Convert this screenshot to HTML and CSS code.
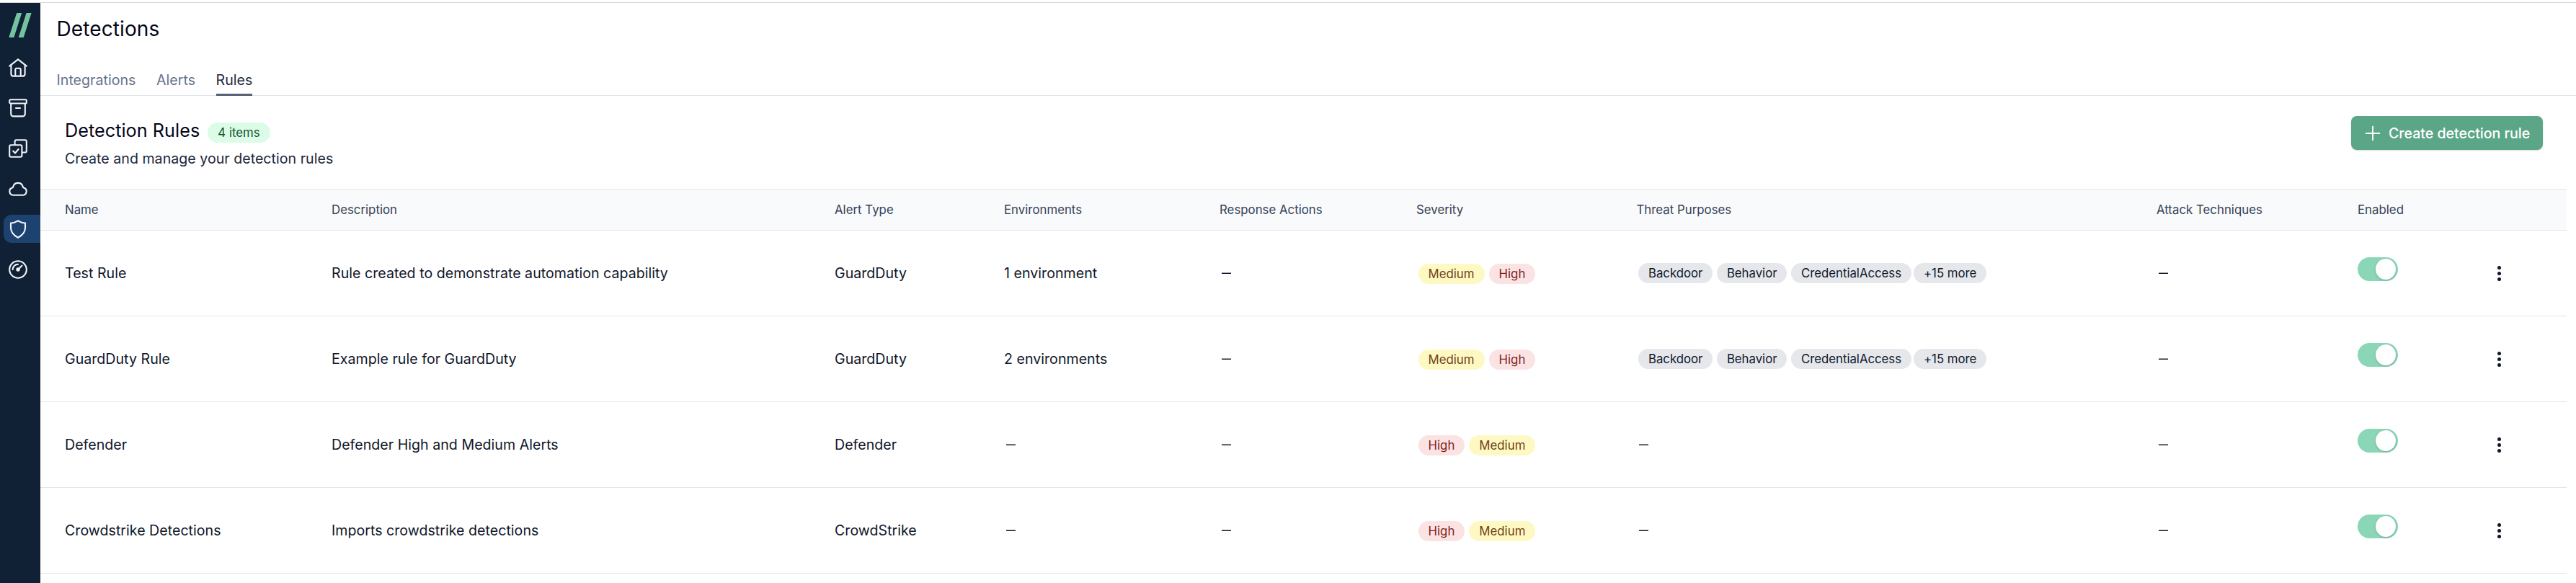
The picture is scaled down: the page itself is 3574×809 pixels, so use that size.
FILE: index.html
```html
<!DOCTYPE html>
<html lang="en">
<head>
<meta charset="utf-8">
<title>Detections</title>
<link rel="stylesheet" href="styles.css">
</head>
<body>
<div class="app">
  <nav class="sidebar">
    <svg class="logo" viewBox="0 0 56 64"><path d="M12.3 48 23.2 14h7L19.3 48zM25.7 48 36.6 14h7L32.7 48z"/></svg>
    <a class="nav-item"><svg class="icon" viewBox="0 0 28 28"><path d="M2.2 11.6 14 2.4l11.800 9.200M4.400 10v12.400q0 3.200 3.200 3.200h12.800q3.200 0 3.200-3.200V10M10.300 25.400v-8.700q0-2 2-2h3.400q2 0 2 2v8.700"/></svg></a>
    <a class="nav-item"><svg class="icon" viewBox="0 0 28 28"><path d="M3.800 2.300h20.400q1.600 0 1.600 1.600v2q0 1.600-1.600 1.600H3.800q-1.600 0-1.600-1.600v-2q0-1.600 1.600-1.600zM4.200 7.500v13.900q0 4 4 4h11.600q4 0 4-4V7.500M11 14h6"/></svg></a>
    <a class="nav-item"><svg class="icon" viewBox="0 0 28 28"><path d="M9.600 9.300V4.300q0-2 2-2h12.200q2 0 2 2v13.200q0 2-2 2h-4.400M4.200 9.300h13.200q2 0 2 2v12.400q0 2-2 2H4.200q-2 0-2-2V11.300q0-2 2-2zM7.200 17.500l2.800 3 4.600-5.500"/></svg></a>
    <a class="nav-item"><svg class="icon" viewBox="0 0 28 28"><path d="M7.500 22.800a5.300 5.300 0 0 1-1.300-10.400q.8-.3 1-1.200a7 7 0 0 1 13.600 0q.2.900 1 1.200a5.300 5.300 0 0 1-1.300 10.400z"/></svg></a>
    <a class="nav-item nav-item-active"><svg class="icon" viewBox="0 0 28 28"><path d="M14 2.300q4.500 2.900 10 3.200v6.500c0 6.500-4.300 10.700-10 13.700-5.700-3-10-7.200-10-13.700V5.500q5.500-.3 10-3.200z"/></svg></a>
    <a class="nav-item"><svg class="icon" viewBox="0 0 28 28"><circle cx="14" cy="14" r="11.800"/><path d="M6.700 14A7.300 7.300 0 0 1 14 6.700M14.500 13.500l5-5"/><circle class="hub" cx="14" cy="14" r="2.700"/></svg></a>
  </nav>
  <main class="main">
    <h1 class="title">Detections</h1>
    <div class="tabs">
      <a class="tab">Integrations</a>
      <a class="tab">Alerts</a>
      <a class="tab tab-active">Rules</a>
    </div>
    <header class="section">
      <div>
        <div class="section-heading"><h2 class="section-title">Detection Rules</h2><span class="badge green">4 items</span></div>
        <p class="section-text">Create and manage your detection rules</p>
      </div>
      <button class="create"><svg class="plus" viewBox="0 0 20 20"><path d="M10 .8v18.400M.8 10h18.400"/></svg>Create detection rule</button>
    </header>
    <div class="table">
      <div class="row head">
        <span>Name</span><span>Description</span><span>Alert Type</span><span>Environments</span><span>Response Actions</span><span>Severity</span><span>Threat Purposes</span><span>Attack Techniques</span><span>Enabled</span><span></span>
      </div>
      <div class="row">
        <span>Test Rule</span><span>Rule created to demonstrate automation capability</span><span>GuardDuty</span><span>1 environment</span><span><i class="dash"></i></span>
        <span class="badges severity"><b class="badge yellow">Medium</b><b class="badge red">High</b></span>
        <span class="badges purposes"><b class="badge gray">Backdoor</b><b class="badge gray">Behavior</b><b class="badge gray">CredentialAccess</b><b class="badge gray more">+15 more</b></span>
        <span><i class="dash"></i></span><span><i class="toggle"></i></span><span class="menu"><i></i><i></i><i></i></span>
      </div>
      <div class="row">
        <span>GuardDuty Rule</span><span>Example rule for GuardDuty</span><span>GuardDuty</span><span>2 environments</span><span><i class="dash"></i></span>
        <span class="badges severity"><b class="badge yellow">Medium</b><b class="badge red">High</b></span>
        <span class="badges purposes"><b class="badge gray">Backdoor</b><b class="badge gray">Behavior</b><b class="badge gray">CredentialAccess</b><b class="badge gray more">+15 more</b></span>
        <span><i class="dash"></i></span><span><i class="toggle"></i></span><span class="menu"><i></i><i></i><i></i></span>
      </div>
      <div class="row">
        <span>Defender</span><span>Defender High and Medium Alerts</span><span>Defender</span><span><i class="dash"></i></span><span><i class="dash"></i></span>
        <span class="badges severity"><b class="badge red">High</b><b class="badge yellow">Medium</b></span>
        <span><i class="dash"></i></span>
        <span><i class="dash"></i></span><span><i class="toggle"></i></span><span class="menu"><i></i><i></i><i></i></span>
      </div>
      <div class="row">
        <span>Crowdstrike Detections</span><span>Imports crowdstrike detections</span><span>CrowdStrike</span><span><i class="dash"></i></span><span><i class="dash"></i></span>
        <span class="badges severity"><b class="badge red">High</b><b class="badge yellow">Medium</b></span>
        <span><i class="dash"></i></span>
        <span><i class="dash"></i></span><span><i class="toggle"></i></span><span class="menu"><i></i><i></i><i></i></span>
      </div>
    </div>
  </main>
</div>
</body>
</html>
```
FILE: styles.css
```css
* { box-sizing: border-box; }
body {
  margin: 0;
  font-family: Inter, "Liberation Sans", sans-serif;
  font-size: 19.6px;
  letter-spacing: 0.02px;
  color: #0f172a;
  background: #fff;
}
h1, h2, p { margin: 0; font-weight: 400; }
.app {
  display: flex;
  height: 809px;
  padding-top: 4px;
  overflow: hidden;
  background: linear-gradient(#fff 3px, #d9d9db 3px, #d9d9db 4px, #fff 4px);
}
.sidebar {
  width: 56px;
  flex: none;
  display: flex;
  flex-direction: column;
  gap: 17px;
  background: #102136;
}
.logo { width: 56px; height: 64px; flex: none; margin-bottom: -11px; fill: #74c2a0; }
.nav-item {
  height: 39px;
  margin-left: 5px;
  padding-left: 6px;
  display: flex;
  align-items: center;
  border-radius: 11px 0 0 11px;
}
.nav-item-active { background: #1e4270; }
.icon {
  width: 28px;
  height: 28px;
  fill: none;
  stroke: #f1f5f9;
  stroke-width: 2.1;
  stroke-linecap: round;
  stroke-linejoin: round;
}
.hub { fill: #f1f5f9; stroke: none; }
.main { flex: 1; min-width: 0; }
.title { padding: 17px 22.500px 1px; font-size: 28px; line-height: 38px; letter-spacing: 0.1px; color: #020617; }
.tabs {
  display: flex;
  gap: 28.500px;
  height: 73px;
  padding: 32px 22.500px 0;
  border-bottom: 1px solid #e2e4ec;
  line-height: 28px;
  color: #64748b;
}
.tab { height: 41px; padding-top: 5px; }
.tab-active { color: #1e293b; border-bottom: 3px solid #586174; }
.section {
  display: flex;
  justify-content: space-between;
  align-items: flex-start;
  height: 129px;
  padding: 28px 46px 0 34px;
}
.section-heading { display: flex; align-items: center; gap: 11px; height: 40px; }
.section-title { font-size: 25.2px; letter-spacing: 0.05px; color: #020617; }
.section-text { margin-top: 5px; line-height: 28px; color: #1e293b; }
.badge {
  display: inline-flex;
  align-items: center;
  height: 28px;
  padding: 0 14px;
  border-radius: 14px;
  font-size: 16.8px;
  font-weight: 400;
  white-space: nowrap;
}
.section-heading .badge { margin-top: 6px; }
.green { background: #dcfce7; color: #14532d; }
.yellow { background: #fef9c3; color: #713f12; }
.red { background: #fbe3e3; color: #7f1d1d; }
.gray { background: #e5e7eb; color: #0f172a; }
.create {
  display: flex;
  align-items: center;
  gap: 12px;
  width: 266px;
  height: 47px;
  padding: 0 0 0 20px;
  border: 0;
  border-radius: 8px;
  background: #5ba687;
  box-shadow: 0 1px 2px rgba(0, 0, 0, .15);
  color: #fff;
  font: 500 19.6px Inter, "Liberation Sans", sans-serif;
  letter-spacing: -0.03px;
  white-space: nowrap;
}
.plus { width: 20px; height: 20px; flex: none; fill: none; stroke: #fff; stroke-width: 2; stroke-linecap: round; }
.table { width: 3505px; border-top: 1px solid #e2e5ea; }
.row {
  display: grid;
  grid-template-columns: 370px 698px 235px 299px 273px 305.500px 721.500px 279px 168px 1fr;
  align-items: center;
  height: 119px;
  padding-left: 34px;
  border-bottom: 1px solid #e2e5ea;
  white-space: nowrap;
}
.head { height: 57px; background: #f8fafc; font-size: 16.8px; color: #334155; }
.badges { display: flex; gap: 6px; padding-left: 3px; }
.purposes { gap: 5.500px; padding-left: 2.500px; letter-spacing: -0.02px; }
.more { margin-left: -2.500px; }
.severity { padding: 1px 0 0 2.500px; }
.dash { display: block; width: 13px; height: 2px; margin-left: 3px; background: linear-gradient(#8d929c 1px, #0f172a 1px); }
.toggle {
  display: flex;
  justify-content: flex-end;
  width: 56px;
  height: 33px;
  margin-bottom: 12px;
  padding: 2px 3px 0 0;
  border-radius: 17px;
  background: #8ad6b7;
}
.toggle::before {
  content: "";
  width: 28px;
  height: 29px;
  border-radius: 50%;
  background: #fff;
  box-shadow: 0 1px 3px rgba(0, 0, 0, .2);
}
.menu { display: flex; flex-direction: column; align-items: center; gap: 3px; width: 56px; }
.menu i { width: 5px; height: 5px; border-radius: 50%; background: #0f172a; }
```
